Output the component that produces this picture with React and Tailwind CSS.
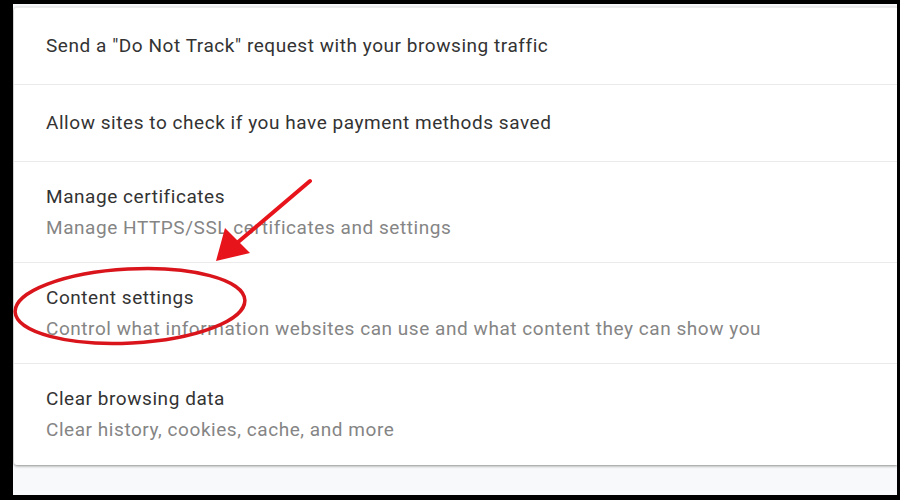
import React from 'react'

const rows = [
  { title: 'Send a "Do Not Track" request with your browsing traffic' },
  { title: 'Allow sites to check if you have payment methods saved' },
  { title: 'Manage certificates', sub: 'Manage HTTPS/SSL certificates and settings' },
  { title: 'Content settings', sub: 'Control what information websites can use and what content they can show you' },
  { title: 'Clear browsing data', sub: 'Clear history, cookies, cache, and more' },
]

const App = () => {
  return (
    <div className="w-[900px] h-[500px] bg-black pt-[4px] pl-[13px] pr-[3px] pb-[5px]" style={{ fontFamily: 'Roboto, "Liberation Sans", sans-serif' }}>
      <div className="relative h-full bg-[#f8f9fa] pt-[3px] pl-[1px] overflow-hidden">
        <div className="bg-white rounded-l-[3px] shadow-[0_1px_3px_rgba(0,0,0,0.45)] border-t border-[#ececec]">
          {rows.map((r, i) => (
            <div
              key={i}
              className={`flex flex-col justify-center pl-[32px] ${r.sub ? 'h-[101px]' : 'h-[77px]'} ${i < rows.length - 1 ? 'border-b border-[#ebebeb]' : ''}`}
            >
              <div className="text-[19px] leading-[26px] tracking-[0.55px] text-[#333333]">{r.title}</div>
              {r.sub && <div className="text-[19px] leading-[26px] tracking-[0.55px] mt-[5px] text-[#858585]">{r.sub}</div>}
            </div>
          ))}
        </div>
        {/* annotation: arrow + circle around Content settings */}
        <svg className="absolute left-[-14px] top-[-4px]" width="900" height="500" viewBox="0 0 900 500">
          <line x1="311" y1="181" x2="238" y2="243" stroke="#e8141b" strokeWidth="4" strokeLinecap="round" />
          <polygon points="217,261 226,228 251,253" fill="#e8141b" />
          <ellipse cx="131" cy="306" rx="115" ry="37" fill="none" stroke="#d9141b" strokeWidth="3.5" transform="rotate(-3 131 306)" />
        </svg>
      </div>
    </div>
  )
}

export default App
